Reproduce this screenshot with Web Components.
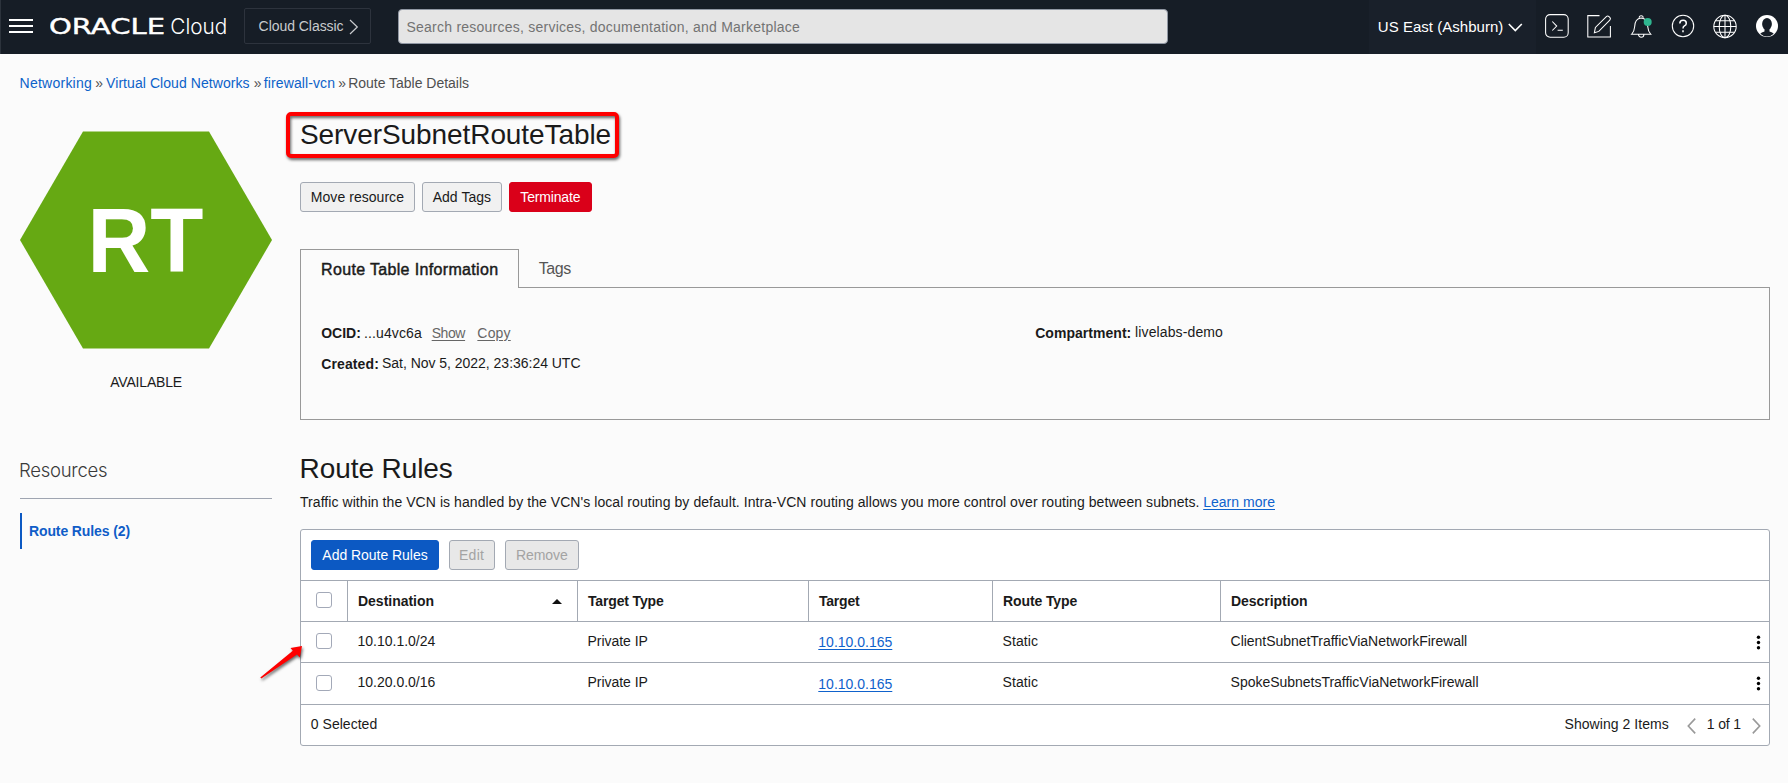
<!DOCTYPE html>
<html lang="en">
<head>
<meta charset="utf-8">
<title>Route Table Details</title>
<style>
  html, body { margin: 0; height: 100%; background: #fbfbfb; }
  body { font: 14px/20px "Liberation Sans", Arial, sans-serif; color: #1a1a1a; overflow: hidden; }
</style>
</head>
<body>
<cloud-page></cloud-page>
<script>
const canvas = document.createElement('canvas').getContext('2d');

class Base extends HTMLElement {
  connectedCallback() {
    if (this.shadowRoot) return;
    this.attachShadow({ mode: 'open' }).innerHTML =
      '<style>*{box-sizing:border-box}:host{display:block;box-sizing:border-box}</style>' + this.view();
  }
}

/* A text label tracked to an exact ink width given in its "w" attribute. */
customElements.define('fit-text', class extends HTMLElement {
  connectedCallback() {
    if (this.shadowRoot) return;
    this.attachShadow({ mode: 'open' }).innerHTML =
      '<style>:host{display:inline-block;flex:none;white-space:nowrap;text-underline-offset:1.5px;text-decoration-thickness:1px}</style><slot></slot>';
    const w = parseFloat(this.getAttribute('w')), t = this.textContent, cs = getComputedStyle(this);
    canvas.font = `${cs.fontWeight} ${cs.fontSize} ${cs.fontFamily}`;
    const m = canvas.measureText(t);
    const ink = m.actualBoundingBoxLeft + m.actualBoundingBoxRight;
    if (t.length > 1) this.style.letterSpacing = ((w - ink) / (t.length - 1)).toFixed(3) + 'px';
    this.style.width = w + 'px';
    this.style.textIndent = m.actualBoundingBoxLeft.toFixed(2) + 'px';
  }
});

customElements.define('ui-button', class extends Base {
  view() {
    return `<style>
      :host{display:flex;align-items:center;justify-content:center;height:30px;border:1px solid #a3a9b3;border-radius:3px;background:#f1f1f1;flex:none}
      :host([kind=danger]){background:#da0019;border-color:#da0019;color:#fff}
      :host([kind=primary]){background:#0c59c3;border-color:#0c59c3;color:#fff}
      :host([disabled]){background:#e8e8e8;color:#a3a3a3}
    </style><slot></slot>`;
  }
});

customElements.define('cloud-header', class extends Base {
  view() {
    return `<style>
      :host{display:flex;height:54px;background:#161d26;border-left:1px solid #2c333c;color:#fff}
      svg{display:block;flex:none}
      .menu{margin:19px 0 0 8px}
      .logo{margin:12px 0 0 17px}
      .classic{margin:8px 0 0 14px;width:127px;height:36px;border:1px solid #2d333d;border-radius:2px;display:flex;padding:7px 0 0 13.6px;color:#c9cbce}
      .classic svg{margin:3px 0 0 5px}
      .search{margin:9px 0 0 27px;width:770px;height:35px;background:#e5e5e5;border:1px solid #9097a3;border-radius:4px;padding:7px 0 0 7.5px;color:#737373}
      .region{margin-left:201px;width:167px;background:#19202a;padding:17px 0 0 9.8px;font-size:15px;display:flex}
      .region svg{margin:6px 0 0 5px}
      .icons{margin:12px 0 0 8px}
    </style>
    <svg class="menu" width="24" height="14" fill="#fff"><path d="M0 0h24v2H0zM0 6h24v2H0zM0 12h24v2H0z"/></svg>
    <svg class="logo" width="180" height="28" fill="#fff">
      <text x="-1" y="22" font-family="DejaVu Sans" font-size="20.5" stroke="#fff" stroke-width=".4" textLength="116" lengthAdjust="spacingAndGlyphs">ORACLE</text>
      <text x="120.3" y="22" font-family="Inter" font-weight="300" font-size="21.5" textLength="57" lengthAdjust="spacingAndGlyphs">Cloud</text>
    </svg>
    <div class="classic"><fit-text w="85">Cloud Classic</fit-text>
      <svg width="10" height="16" fill="none" stroke="#c9cbce" stroke-width="1.2"><path d="M1 1l7.3 7L1 15"/></svg></div>
    <div class="search"><fit-text w="393.5">Search resources, services, documentation, and Marketplace</fit-text></div>
    <div class="region"><fit-text w="124.5">US East (Ashburn)</fit-text>
      <svg width="15" height="10" fill="none" stroke="#fff" stroke-width="1.6"><path d="M.8 1l6.5 6.6L13.8 1"/></svg></div>
    <svg class="icons" width="236" height="30" fill="none" stroke="#fff" stroke-width="1.05">
      <rect x="1.6" y="2.6" width="22.6" height="22.6" rx="4.5"/><path d="M8.3 9.5l4.4 4.6-4.4 4.4M13.6 18.3h5.2"/>
      <path d="M55.5 3.6H43.8v21.3h22.6V14"/><path d="M50.4 20.7l1-5.2L62.6 4.4q1.2-.8 2.4.3l1 1q1 1.2-.2 2.4L54.8 19.4z"/>
      <path d="M87.6 22.3q2.7-2.8 3-7.3.2-8.5 6.6-9 6.4.5 6.6 9 .3 4.5 3 7.3zM95.2 5.8a2 2 0 1 1 4 0M94.5 22.5a2.7 2.7 0 0 0 5.400 0"/>
      <circle cx="103.7" cy="10" r="4" fill="#2fb58f" stroke="none"/>
      <circle cx="139" cy="14" r="10.7"/><path d="M135.8 11.5q.1-3.2 3.3-3.2t3.2 2.9q0 1.7-1.9 2.7-1.4.8-1.4 2.6M139 18.3v2" stroke-width="1.5"/>
      <circle cx="181" cy="14.5" r="11.2"/><ellipse cx="181" cy="14.5" rx="5.8" ry="11.2"/><path d="M181 3.3v22.4M169.8 14.5h22.4M171.8 8.7h18.4M171.8 20.3h18.4"/>
      <circle cx="223" cy="14" r="11" fill="#fff" stroke="none"/>
      <ellipse cx="223" cy="12" rx="4.9" ry="6.1" fill="#161d26" stroke="none"/><path d="M216.3 21.7q1-1.7 4.2-2.3v-4h5v4q3.2.6 4.2 2.3-2.8 2.7-6.7 2.7t-6.7-2.7z" fill="#161d26" stroke="none"/>
    </svg>`;
  }
});

customElements.define('bread-crumbs', class extends Base {
  view() {
    return `<style>
      :host{display:flex;height:58px;padding:19px 0 0 20.6px;color:#4f4f4f}
      a{color:#0c62c9}.s{margin:0 5.4px 0 4.2px}
    </style>
    <a><fit-text w="70.4">Networking</fit-text></a><fit-text class="s" w="5.5">»</fit-text>
    <a><fit-text w="143.5">Virtual Cloud Networks</fit-text></a><fit-text class="s" w="5.5" style="margin-right:4.6px">»</fit-text>
    <a><fit-text w="70.3">firewall-vcn</fit-text></a><fit-text class="s" w="5.5">»</fit-text>
    <fit-text w="120">Route Table Details</fit-text>`;
  }
});

customElements.define('resource-sidebar', class extends Base {
  view() {
    return `<style>
      :host{width:252px}
      svg{display:block;margin-top:19px}
      .state{margin-top:23px;text-align:center;height:20px}
      .res{margin-top:66px;height:41px;border-bottom:1px solid #9fa5b1;font:300 18.5px/24px Inter,"Liberation Sans",sans-serif;color:#3a3a3a}
      .item{margin-top:14px;height:36px;border-left:2px solid #0c59c3;padding:8px 0 0 7px;font-weight:700;color:#0f5dc8}
    </style>
    <svg width="252" height="218"><path d="M63 .6h126l63 108.400-63 108.400H63L0 109z" fill="#66a913"/>
      <text x="67.5" y="141" font-family="Liberation Sans" font-weight="700" font-size="91.5" fill="#fff" textLength="116" lengthAdjust="spacingAndGlyphs">RT</text></svg>
    <div class="state"><fit-text w="71.5">AVAILABLE</fit-text></div>
    <div class="res"><fit-text w="87">Resources</fit-text></div>
    <div class="item"><fit-text w="100.4">Route Rules (2)</fit-text></div>`;
  }
});

customElements.define('info-tabs', class extends Base {
  view() {
    return `<style>
      .tabs{display:flex;height:39px;margin-bottom:-1px;font-size:16px}
      .on{width:219px;border:1px solid #999;border-bottom:0;background:#fbfbfb;padding:10px 0 0 21px;-webkit-text-stroke:.45px #1a1a1a;z-index:1}
      .off{padding:10px 0 0 19.7px;color:#555}
      .panel{height:133px;border:1px solid #999;padding:35px 0 0 20.2px;display:grid;grid-template-columns:714px 1fr}
      .col{display:flex;flex-direction:column;gap:11px}
      .f{display:flex;height:20px}
      .u{text-decoration:underline;color:#666}
      .up{margin-top:-1px}
    </style>
    <div class="tabs"><div class="on"><fit-text w="175.5">Route Table Information</fit-text></div><div class="off"><fit-text w="32.6">Tags</fit-text></div></div>
    <div class="panel">
      <div class="col">
        <div class="f"><b><fit-text w="39">OCID:</fit-text></b><fit-text w="57" style="margin-left:4.8px">...u4vc6a</fit-text><fit-text class="u" w="34.7" style="margin-left:9.7px">Show</fit-text><fit-text class="u" w="33.2" style="margin-left:11px">Copy</fit-text></div>
        <div class="f"><b><fit-text w="57">Created:</fit-text></b><fit-text class="up" w="198.4" style="margin-left:3.8px">Sat, Nov 5, 2022, 23:36:24 UTC</fit-text></div>
      </div>
      <div class="col"><div class="f"><b><fit-text w="95.4">Compartment:</fit-text></b><fit-text class="up" w="88" style="margin-left:4.5px">livelabs-demo</fit-text></div></div>
    </div>`;
  }
});

customElements.define('check-box', class extends Base {
  view() { return `<style>:host{width:16px;height:16px;border:1px solid #a3a9b8;border-radius:3px;background:#fff}</style>`; }
});

const rowStyle = `<style>
  :host{display:grid;grid-template-columns:46px 230px 231px 184px 228px 1fr auto;height:41px;border-top:1px solid #a3a9b3}
  check-box{margin-left:15px}
</style>`;

customElements.define('table-head', class extends Base {
  view() {
    return rowStyle + `<style>
      :host{font-weight:700}
      check-box{margin-top:11px}
      .c{border-left:1px solid #a3a9b3;padding:10px 0 0 10px;display:flex}
      svg{margin:8px 0 0 118.500px}
    </style>
    <check-box></check-box>
    <div class="c"><fit-text w="75.5">Destination</fit-text><svg width="10" height="5"><path d="M0 5L5 0l5 5z" fill="#111"/></svg></div>
    <div class="c"><fit-text w="76">Target Type</fit-text></div>
    <div class="c"><fit-text w="41">Target</fit-text></div>
    <div class="c"><fit-text w="74.5">Route Type</fit-text></div>
    <div class="c"><fit-text w="76">Description</fit-text></div>`;
  }
});

customElements.define('route-row', class extends Base {
  view() {
    const [dest, desc, dw, off, h] = ['dest', 'desc', 'dw', 'off', 'h'].map(k => this.getAttribute(k));
    return rowStyle + `<style>
      :host{height:${h}px}
      check-box{margin-top:${10 + +off}px}
      .c{padding:9px 0 0 11.5px}
      .l{padding-top:${9 + +off}px;padding-left:11.3px;color:#0f62cc}
      .l fit-text{text-decoration:underline}
      .d{padding-left:10.6px}
      svg{margin:13px 8px 0 0}
    </style>
    <check-box></check-box>
    <div class="c"><fit-text w="77">${dest}</fit-text></div>
    <div class="c"><fit-text w="59">Private IP</fit-text></div>
    <a class="c l"><fit-text w="73.2">10.10.0.165</fit-text></a>
    <div class="c d"><fit-text w="35.4">Static</fit-text></div>
    <div class="c d"><fit-text w="${dw}">${desc}</fit-text></div>
    <svg width="5" height="15"><circle cx="2.5" cy="2.3" r="1.7"/><circle cx="2.5" cy="7.5" r="1.7"/><circle cx="2.5" cy="12.7" r="1.7"/></svg>`;
  }
});

customElements.define('route-table', class extends Base {
  view() {
    return `<style>
      :host{border:1px solid #a3a9b3;border-radius:3px;background:#fff;height:217px}
      .bar{display:flex;gap:10px;height:50px;padding:10px}
      .foot{display:flex;height:41px;border-top:1px solid #a3a9b3;padding:9px 8.5px 0 9.8px}
      .n{margin-left:auto}
      .foot svg{margin-top:4px}
    </style>
    <div class="bar"><ui-button kind="primary" style="width:128px"><fit-text w="105.3">Add Route Rules</fit-text></ui-button>
      <ui-button disabled style="width:46px"><fit-text w="24">Edit</fit-text></ui-button>
      <ui-button disabled style="width:74px;padding-left:1px"><fit-text w="51">Remove</fit-text></ui-button></div>
    <table-head></table-head>
    <route-row dest="10.10.1.0/24" desc="ClientSubnetTrafficViaNetworkFirewall" dw="236.5" off="1" h="41"></route-row>
    <route-row dest="10.20.0.0/16" desc="SpokeSubnetsTrafficViaNetworkFirewall" dw="247.8" off="2" h="42"></route-row>
    <div class="foot"><fit-text w="65.6">0 Selected</fit-text><fit-text class="n" w="104.3">Showing 2 Items</fit-text>
      <svg style="margin-left:18.5px" width="9" height="16" fill="none" stroke="#999" stroke-width="1.6"><path d="M8.2.6L1.3 8l6.9 7.4"/></svg>
      <fit-text w="33.4" style="margin:0 10.3px 0 11.5px">1 of 1</fit-text>
      <svg width="9" height="16" fill="none" stroke="#999" stroke-width="1.6"><path d="M.8.6L7.7 8 .8 15.4"/></svg></div>`;
  }
});

/* Red callouts laid over the page. */
customElements.define('call-out', class extends Base {
  view() {
    return `<style>
      :host{position:absolute;pointer-events:none}
      .box{width:333px;height:46px;border:4px solid #fe0000;border-radius:5px;filter:drop-shadow(1.5px 2px 1.5px rgba(0,0,0,.6))}
      svg{display:block;overflow:visible;filter:drop-shadow(1.5px 2px 1.5px rgba(0,0,0,.6))}
    </style>` + (this.getAttribute('shape') === 'box' ? '<div class="box"></div>' :
      '<svg width="42" height="33"><path d="M42 0L30.5 2l2.300 2.800L.3 31.500l1 1L37 8.500l2.800 3z" fill="#fe0000"/></svg>');
  }
});

customElements.define('cloud-page', class extends Base {
  view() {
    return `<style>
      main{display:grid;grid-template-columns:252px 1fr;gap:28px;padding:0 18px 0 20px}
      h1,h2{margin:0;font-weight:400;font-size:28px;line-height:32px;height:32px;padding-left:1px}
      h1{margin-top:7px}
      h2{margin-top:33px;padding-left:1.6px}
      .b{display:flex;gap:7px;margin-top:31px}
      info-tabs{margin-top:37px}
      p{margin:7px 0 0;height:20px;display:flex;gap:5.6px}
      p a{color:#0f62cc}
      p a fit-text{text-decoration:underline}
      route-table{margin-top:17px}
    </style>
    <cloud-header></cloud-header>
    <bread-crumbs></bread-crumbs>
    <main>
      <resource-sidebar></resource-sidebar>
      <div>
        <h1><fit-text w="309.6">ServerSubnetRouteTable</fit-text></h1>
        <div class="b"><ui-button style="width:115px;padding-left:1px"><fit-text w="92.3">Move resource</fit-text></ui-button>
          <ui-button style="width:80px"><fit-text w="58.7">Add Tags</fit-text></ui-button>
          <ui-button kind="danger" style="width:83px"><fit-text w="60.4">Terminate</fit-text></ui-button></div>
        <info-tabs></info-tabs>
        <h2><fit-text w="150.2">Route Rules</fit-text></h2>
        <p><fit-text w="898.6">Traffic within the VCN is handled by the VCN's local routing by default. Intra-VCN routing allows you more control over routing between subnets.</fit-text><a><fit-text w="71">Learn more</fit-text></a></p>
        <route-table></route-table>
      </div>
    </main>
    <call-out shape="box" style="left:286px;top:112px"></call-out>
    <call-out shape="arrow" style="left:260px;top:646.3px"></call-out>`;
  }
});
</script>
</body>
</html>
